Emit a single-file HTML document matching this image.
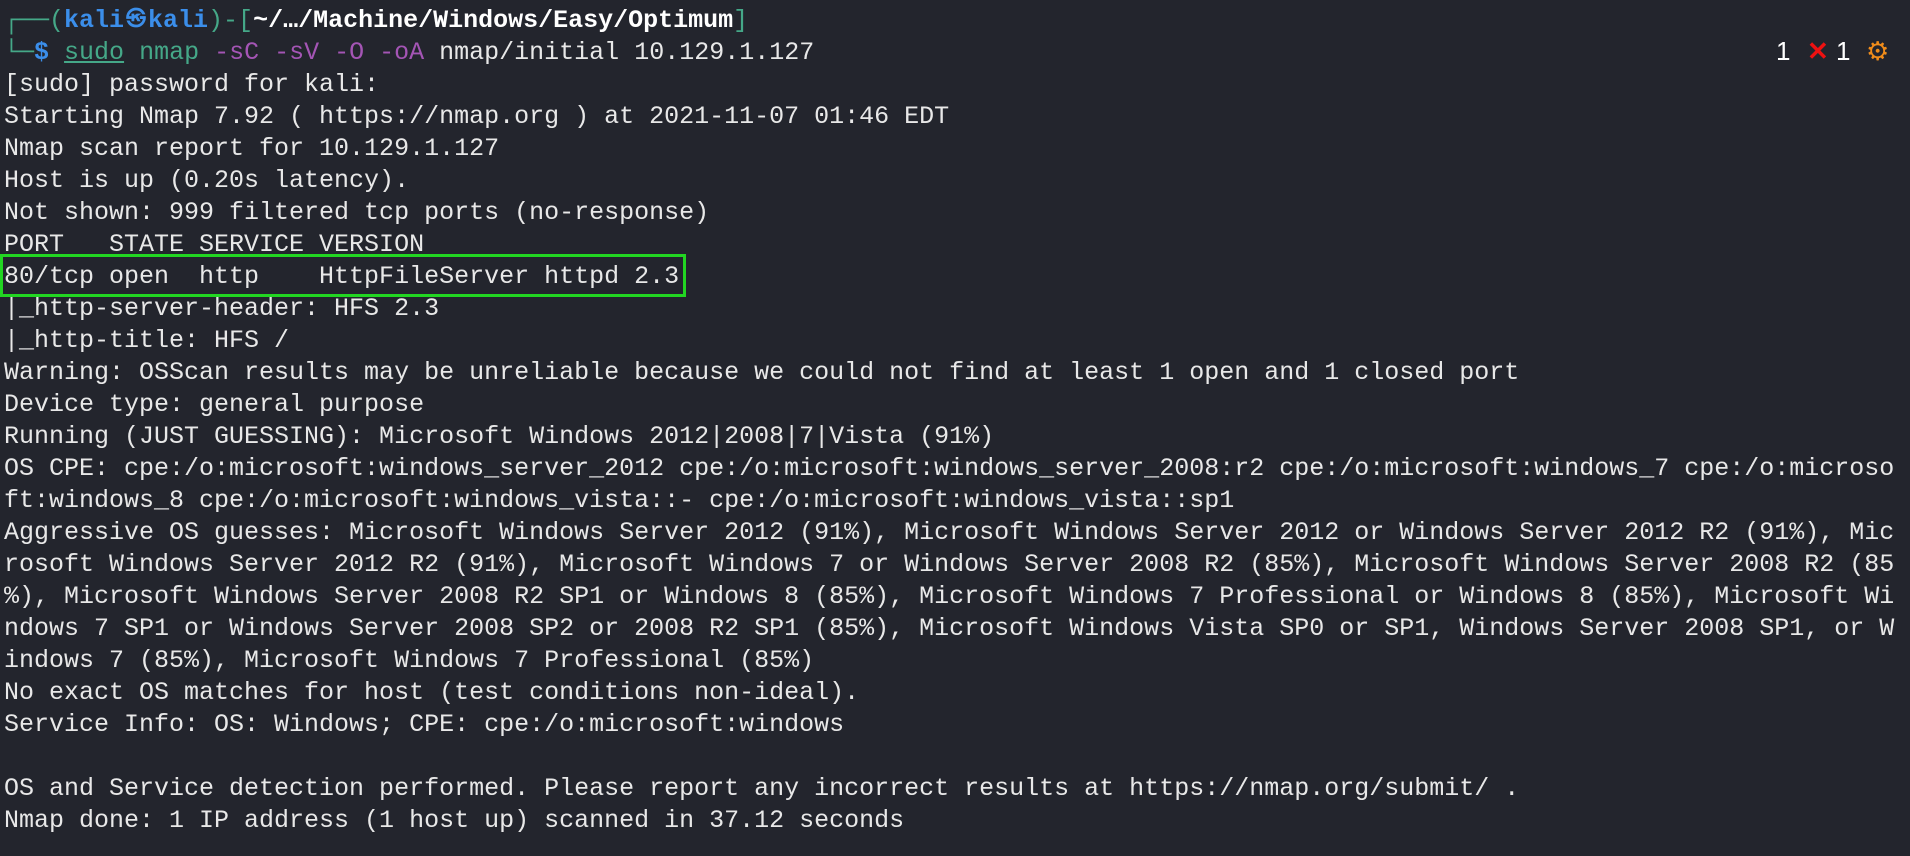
<!DOCTYPE html>
<html><head><meta charset="utf-8"><style>
html,body{margin:0;padding:0;width:1910px;height:856px;background:#23252d;overflow:hidden}
pre{margin:0;position:absolute;left:4px;top:5px;font-family:"Liberation Mono","DejaVu Sans Mono",monospace;font-size:25px;letter-spacing:0;line-height:32px;color:#e8e8e8;white-space:pre}
.t{color:#45a888}.b{color:#3b8eea;font-weight:bold}.w{color:#ffffff;font-weight:bold}.p{color:#a455b5}.u{text-decoration:underline}
.k{display:inline-block;width:24px;text-align:center;font-size:20px;overflow:hidden;vertical-align:top}
.box{position:absolute;left:0;top:254px;width:680px;height:37px;border:3px solid #22d622}
.st{position:absolute;top:36px;font-family:"Liberation Sans",sans-serif;font-size:26px;color:#fff}
</style></head><body>
<pre><span class="t">┌──(</span><span class="b">kali<span class="k">㉿</span>kali</span><span class="t">)-[</span><span class="w">~/…/Machine/Windows/Easy/Optimum</span><span class="t">]</span>
<span class="t">└─</span><span class="b">$</span> <span class="t u">sudo</span> <span class="t">nmap</span> <span class="p">-sC -sV -O -oA</span> nmap/initial 10.129.1.127
[sudo] password for kali:
Starting Nmap 7.92 ( https://nmap.org ) at 2021-11-07 01:46 EDT
Nmap scan report for 10.129.1.127
Host is up (0.20s latency).
Not shown: 999 filtered tcp ports (no-response)
PORT   STATE SERVICE VERSION
80/tcp open  http    HttpFileServer httpd 2.3
|_http-server-header: HFS 2.3
|_http-title: HFS /
Warning: OSScan results may be unreliable because we could not find at least 1 open and 1 closed port
Device type: general purpose
Running (JUST GUESSING): Microsoft Windows 2012|2008|7|Vista (91%)
OS CPE: cpe:/o:microsoft:windows_server_2012 cpe:/o:microsoft:windows_server_2008:r2 cpe:/o:microsoft:windows_7 cpe:/o:microso
ft:windows_8 cpe:/o:microsoft:windows_vista::- cpe:/o:microsoft:windows_vista::sp1
Aggressive OS guesses: Microsoft Windows Server 2012 (91%), Microsoft Windows Server 2012 or Windows Server 2012 R2 (91%), Mic
rosoft Windows Server 2012 R2 (91%), Microsoft Windows 7 or Windows Server 2008 R2 (85%), Microsoft Windows Server 2008 R2 (85
%), Microsoft Windows Server 2008 R2 SP1 or Windows 8 (85%), Microsoft Windows 7 Professional or Windows 8 (85%), Microsoft Wi
ndows 7 SP1 or Windows Server 2008 SP2 or 2008 R2 SP1 (85%), Microsoft Windows Vista SP0 or SP1, Windows Server 2008 SP1, or W
indows 7 (85%), Microsoft Windows 7 Professional (85%)
No exact OS matches for host (test conditions non-ideal).
Service Info: OS: Windows; CPE: cpe:/o:microsoft:windows

OS and Service detection performed. Please report any incorrect results at https://nmap.org/submit/ .
Nmap done: 1 IP address (1 host up) scanned in 37.12 seconds</pre>
<div class="box"></div>
<div class="st" style="left:1776px">1</div>
<div class="st" style="left:1807px;color:#ee1111;font-weight:bold">✕</div>
<div class="st" style="left:1836px">1</div>
<div class="st" style="left:1866px;color:#f08c1a">⚙</div>
</body></html>
